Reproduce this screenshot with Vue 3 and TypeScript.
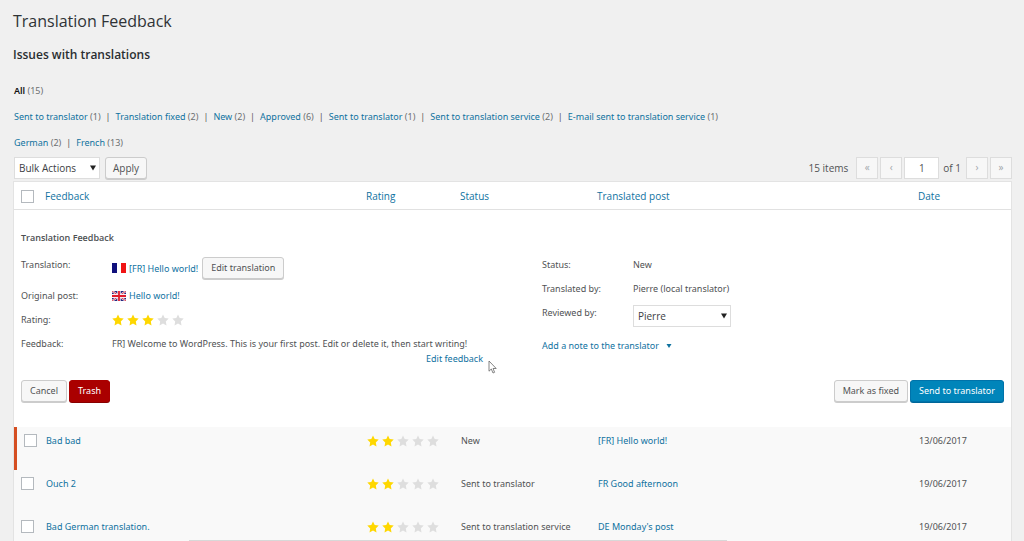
<script setup lang="ts">
import { ref } from 'vue'

interface Filter { label: string; count: number }
interface Issue { title: string; stars: number; status: string; post: string; date: string; flagged?: boolean }

const statuses: Filter[] = [
  { label: 'Sent to translator', count: 1 },
  { label: 'Translation fixed', count: 2 },
  { label: 'New', count: 2 },
  { label: 'Approved', count: 6 },
  { label: 'Sent to translator', count: 1 },
  { label: 'Sent to translation service', count: 2 },
  { label: 'E-mail sent to translation service', count: 1 },
]
const languages: Filter[] = [
  { label: 'German', count: 2 },
  { label: 'French', count: 13 },
]
const issues: Issue[] = [
  { title: 'Bad bad', stars: 2, status: 'New', post: '[FR] Hello world!', date: '13/06/2017', flagged: true },
  { title: 'Ouch 2', stars: 2, status: 'Sent to translator', post: 'FR Good afternoon', date: '19/06/2017' },
  { title: 'Bad German translation.', stars: 2, status: 'Sent to translation service', post: "DE Monday's post", date: '19/06/2017' },
]
const page = ref('1')
const starPath = 'M6 0.4 L7.7 4.1 L11.7 4.6 L8.8 7.4 L9.5 11.4 L6 9.4 L2.5 11.4 L3.2 7.4 L0.3 4.6 L4.3 4.1 Z'
</script>

<template>
  <main class="wrap">
    <h1>Translation Feedback</h1>
    <h2>Issues with translations</h2>

    <nav class="filters" aria-label="All feedback">
      <span><a href="#" class="current">All</a> <span class="count">(15)</span></span>
    </nav>
    <nav class="filters" aria-label="Status">
      <span v-for="(f, i) in statuses" :key="i"><a href="#">{{ f.label }}</a> <span class="count">({{ f.count }})</span><span v-if="i < statuses.length - 1" class="bar">|</span></span>
    </nav>
    <nav class="filters" aria-label="Language">
      <span v-for="(f, i) in languages" :key="i"><a href="#">{{ f.label }}</a> <span class="count">({{ f.count }})</span><span v-if="i < languages.length - 1" class="bar">|</span></span>
    </nav>

    <div class="toolbar">
      <span class="select bulk">
        <select aria-label="Bulk action"><option>Bulk Actions</option></select>
        <svg viewBox="0 0 6 6" aria-hidden="true"><path d="M0 0.5H6L3 5.5Z" /></svg>
      </span>
      <button type="button" class="btn apply">Apply</button>
      <span class="items">15 items</span>
      <div class="pager">
        <button type="button" class="step" disabled aria-label="First page">«</button>
        <button type="button" class="step" disabled aria-label="Previous page">‹</button>
        <input v-model="page" type="text" aria-label="Current page" />
        <span class="total">of 1</span>
        <button type="button" class="step" disabled aria-label="Next page">›</button>
        <button type="button" class="step" disabled aria-label="Last page">»</button>
      </div>
    </div>

    <table>
      <colgroup>
        <col class="c-check" /><col /><col class="c-rating" /><col class="c-status" /><col /><col class="c-date" />
      </colgroup>
      <thead>
        <tr>
          <th scope="col"><input type="checkbox" aria-label="Select all" /></th>
          <th scope="col"><a href="#">Feedback</a></th>
          <th scope="col"><a href="#">Rating</a></th>
          <th scope="col"><a href="#">Status</a></th>
          <th scope="col"><a href="#">Translated post</a></th>
          <th scope="col"><a href="#">Date</a></th>
        </tr>
      </thead>
      <tbody>
        <tr class="detail">
          <td colspan="6">
            <h3>Translation Feedback</h3>
            <div class="panes">
              <dl>
                <dt>Translation:</dt>
                <dd class="inline">
                  <svg class="flag" viewBox="0 0 14 10" aria-hidden="true">
                    <path fill="#10107c" d="M0 0H5V10H0Z" /><path fill="#fff" d="M5 0H9V10H5Z" /><path fill="#f01414" d="M9 0H14V10H9Z" />
                  </svg>
                  <a href="#">[FR] Hello world!</a>
                  <button type="button" class="btn">Edit translation</button>
                </dd>
                <dt>Original post:</dt>
                <dd class="inline">
                  <svg class="flag" viewBox="0 0 14 9" preserveAspectRatio="none" aria-hidden="true">
                    <path fill="#26267e" d="M0 0H14V9H0Z" />
                    <path stroke="#f4e4ec" stroke-width="2" d="M0 0L14 9M14 0L0 9" />
                    <path stroke="#d8283c" stroke-width="0.8" d="M0 0L14 9M14 0L0 9" />
                    <path stroke="#f8eef2" stroke-width="3.4" d="M7 0V9M0 4.5H14" />
                    <path stroke="#e01c2c" stroke-width="1.8" d="M7 0V9M0 4.5H14" />
                  </svg>
                  <a href="#">Hello world!</a>
                </dd>
                <dt>Rating:</dt>
                <dd class="inline">
                  <span class="stars" role="img" aria-label="3 of 5 stars">
                    <svg v-for="n in 5" :key="n" viewBox="0 0 12 12" :class="{ on: n <= 3 }"><path :d="starPath" /></svg>
                  </span>
                </dd>
                <dt>Feedback:</dt>
                <dd class="message">
                  FR] Welcome to WordPress. This is your first post. Edit or delete it, then start writing!
                  <span class="edit">
                    <a href="#">Edit feedback</a>
                    <svg class="cursor" viewBox="0 0 9 14" aria-hidden="true">
                      <path d="M1 1V11.2L3.3 9L5 13L6.6 12.3L5 8.5H8.2Z" />
                    </svg>
                  </span>
                </dd>
              </dl>
              <div>
                <dl>
                  <dt>Status:</dt>
                  <dd>New</dd>
                  <dt>Translated by:</dt>
                  <dd>Pierre (local translator)</dd>
                  <dt><label for="reviewer">Reviewed by:</label></dt>
                  <dd>
                    <span class="select reviewer">
                      <select id="reviewer"><option>Pierre</option></select>
                      <svg viewBox="0 0 6 6" aria-hidden="true"><path d="M0 0.5H6L3 5.5Z" /></svg>
                    </span>
                  </dd>
                </dl>
                <a href="#" class="note">Add a note to the translator
                  <svg viewBox="0 0 6 6" aria-hidden="true"><path d="M0.5 1H5.5L3 5Z" /></svg>
                </a>
              </div>
            </div>
            <div class="actions">
              <button type="button" class="btn">Cancel</button>
              <button type="button" class="btn trash">Trash</button>
              <button type="button" class="btn fixed">Mark as fixed</button>
              <button type="button" class="btn primary">Send to translator</button>
            </div>
          </td>
        </tr>
        <tr v-for="issue in issues" :key="issue.title" class="issue" :class="{ flagged: issue.flagged }">
          <td><input type="checkbox" :aria-label="'Select ' + issue.title" /></td>
          <td><a href="#">{{ issue.title }}</a></td>
          <td>
            <span class="stars" role="img" :aria-label="issue.stars + ' of 5 stars'">
              <svg v-for="n in 5" :key="n" viewBox="0 0 12 12" :class="{ on: n <= issue.stars }"><path :d="starPath" /></svg>
            </span>
          </td>
          <td>{{ issue.status }}</td>
          <td><a href="#">{{ issue.post }}</a></td>
          <td>{{ issue.date }}</td>
        </tr>
      </tbody>
    </table>
    <div class="edge" aria-hidden="true"></div>
  </main>
</template>

<style>
body { margin: 0; background: #f0f0f0; }
</style>

<style scoped>
* { box-sizing: border-box; }
.wrap {
  height: 100vh;
  overflow: hidden;
  padding: 9px 12px 0 13px;
  background: #f0f0f0;
  color: #505254;
  font: 9px/15px "Noto Sans", "Open Sans", sans-serif;
}
a { color: #0f729f; text-decoration: none; }
h1, h2, h3, .toolbar, th { font-family: "Open Sans", "Noto Sans", sans-serif; }
h1 { margin: 0 0 14px; font-size: 16px; line-height: 24px; font-weight: 400; color: #2f3336; }
h2 { margin: 0 0 20px; font-size: 12px; line-height: 16px; font-weight: 600; color: #2a2e31; }
h3 { margin: 0 0 12px; font-size: 9px; line-height: 15px; font-weight: 600; color: #4c4f52; }
.filters { padding-left: 1px; margin-bottom: 10px; line-height: 16px; white-space: nowrap; }
.filters .current { color: #111; font-weight: 600; }
.count { color: #6c6f71; }
.bar { margin: 0 5px; color: #555; }

.toolbar { display: flex; align-items: center; height: 22px; margin: -4px 0 2px; padding-left: 1px; font-size: 10px; }
button, input, select { margin: 0; font: inherit; color: inherit; }
.btn {
  height: 22px;
  padding: 0 8px;
  border: 1px solid #ccc;
  border-radius: 3px;
  background: #f7f7f7;
  box-shadow: 0 1px 0 #ccc;
  color: #505254;
  line-height: 18px;
  white-space: nowrap;
}
.btn.apply { padding: 0 7px; }
.select { position: relative; display: block; height: 22px; font-family: "Open Sans", "Noto Sans", sans-serif; font-size: 10px; }
.select select {
  appearance: none;
  display: block;
  width: 100%;
  height: 22px;
  padding: 0 4px;
  border: 1px solid #ddd;
  border-radius: 0;
  background: #fff;
  color: #3c4043;
}
.select svg { position: absolute; right: 4px; top: 8px; width: 6px; height: 6px; fill: #222; pointer-events: none; }
.bulk { width: 86px; margin-right: 5px; }
.reviewer { width: 98px; }
.items { margin-left: auto; margin-right: 8px; }
.pager { display: flex; align-items: center; gap: 2px; }
.step { width: 22px; height: 22px; padding: 0 0 2px; border: 1px solid #ddd; background: #f7f7f7; color: #a0a5aa; line-height: 18px; }
.pager input { width: 35px; height: 22px; padding: 0; border: 1px solid #ddd; background: #fff; text-align: center; }
.total { margin: 0 3px 0 2px; }

table { width: 100%; table-layout: fixed; border-collapse: separate; border-spacing: 0; border: 1px solid #e3e3e3; background: #fff; }
.c-check { width: 23px; }
.c-rating { width: 94px; }
.c-status { width: 137px; }
.c-date { width: 101px; }
th { height: 28px; padding: 2px 8px 0; border-bottom: 1px solid #e1e1e1; text-align: left; font-size: 10px; font-weight: 400; vertical-align: middle; white-space: nowrap; }
th:first-child { padding: 2px 0 0 7px; }
td { padding: 0 8px; vertical-align: top; }
input[type="checkbox"] { appearance: none; display: block; width: 13px; height: 13px; border: 1px solid #b4b9be; background: #fff; }
.issue td { height: 43px; padding: 6px 0 0 9px; background: #f9f9f9; white-space: nowrap; }
.issue td:first-child { padding: 7px 0 0 7px; }
.flagged td:first-child { border-left: 3px solid #d54e21; }
.detail td { padding: 20px 7px 24px; }

.panes { display: grid; grid-template-columns: 47% 47%; column-gap: 6%; }
dl { display: grid; grid-template-columns: 91px 1fr; row-gap: 9px; margin: 0; }
dt, dd { margin: 0; white-space: nowrap; }
.inline { display: flex; align-items: center; }
.inline .btn { margin-left: 4px; }
.flag { width: 14px; height: 10px; margin-right: 3px; }
.message { white-space: normal; }
.edit { position: relative; display: block; text-align: right; }
.cursor { position: absolute; left: 100%; top: 9px; width: 9px; height: 14px; margin-left: 5px; fill: #fff; stroke: #666; stroke-width: 0.8; }
.note { display: inline-flex; align-items: center; gap: 7px; margin-top: 11px; }
.note svg { width: 6px; height: 6px; fill: #0f729f; }
.stars { display: inline-flex; gap: 3px; height: 15px; align-items: center; }
.stars svg { width: 12px; height: 12px; fill: #dedede; }
.stars .on { fill: #fed700; }

.actions { display: flex; gap: 2px; margin-top: 14px; }
.actions .btn { margin-bottom: 1px; }
.btn.trash { border-color: #a00; background: #a00; box-shadow: 0 1px 0 #800; color: #fff; }
.fixed { margin-left: auto; }
.btn.primary { border-color: #0073aa; background: #0085ba; box-shadow: 0 1px 0 #006799; color: #fff; }
.edge { position: fixed; left: 189px; right: 297px; bottom: 0; height: 1px; background: #d8d8d8; }
</style>
